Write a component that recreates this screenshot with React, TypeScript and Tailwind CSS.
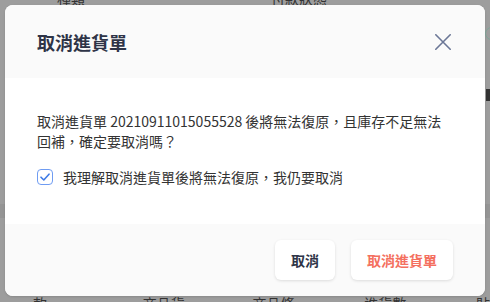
import React from "react";

const font = { fontFamily: '"Noto Sans CJK TC", "Noto Sans", sans-serif' };

function CloseIcon() {
  return (
    <svg width="16" height="16" viewBox="0 0 16 16" fill="none">
      <path d="M0.8 0.8L15.2 15.2M15.2 0.8L0.8 15.2" stroke="#6b7796" strokeWidth="1.6" strokeLinecap="round" />
    </svg>
  );
}

function CheckBox() {
  return (
    <span className="flex h-4 w-4 shrink-0 items-center justify-center rounded-[4px] border-[1.5px] border-[#6f9cf2] bg-white">
      <svg width="10" height="8" viewBox="0 0 10 8" fill="none">
        <path d="M1 4.2L3.8 7L9 1.2" stroke="#3f7be6" strokeWidth="1.6" strokeLinecap="round" strokeLinejoin="round" />
      </svg>
    </span>
  );
}

export default function App() {
  return (
    <div className="relative h-[302px] w-[490px] overflow-hidden bg-[#9d9d9d]" style={font}>
      {/* page behind the overlay */}
      <div className="flex h-full flex-col text-[14px] text-[#2f2f2f]">
        <div className="-mt-[12px] flex h-[16px] text-[#333]">
          <span className="ml-[57px]">種類</span>
          <span className="ml-[186px]">付款狀態</span>
        </div>
        <div className="flex-1" />
        <div className="h-[14px] bg-[#959595]" />
        <div className="h-[75px]" />
        <div className="flex h-[9px] leading-[20px] text-[#333]">
          <span className="ml-[33px]">款式</span>
          <span className="ml-[82px]">商品貨號</span>
          <span className="ml-[54px]">商品條碼</span>
          <span className="ml-[56px]">進貨數量</span>
          <span className="ml-[56px]">貼</span>
        </div>
      </div>
      <div className="absolute right-[-8px] top-[27px] h-[13px] w-[13px] rounded-full border border-[#7fa79a]" />
      <div className="absolute right-0 top-[89px] h-[12px] w-[4px] bg-[#333]" />

      {/* modal */}
      <div className="absolute inset-0 p-[5px] pb-[6px]">
        <div className="flex h-full w-[480px] flex-col overflow-hidden rounded-[8px] bg-white shadow-sm">
          <div className="flex h-[73px] items-center justify-between bg-[#fafafa] pl-[32px] pr-[34px]">
            <h2 className="text-[18px] font-bold leading-[24px] text-[#2e3447]">取消進貨單</h2>
            <CloseIcon />
          </div>
          <div className="flex flex-1 flex-col px-[32px] pt-[33px]">
            <p className="text-[14px] leading-[20px] text-[#333]">
              取消進貨單 20210911015055528 後將無法復原，且庫存不足無法回補，確定要取消嗎？
            </p>
            <label className="mt-[16px] flex items-center gap-[10px] text-[14px] leading-[20px] text-[#333]">
              <CheckBox />
              <span>我理解取消進貨單後將無法復原，我仍要取消</span>
            </label>
          </div>
          <div className="flex h-[72px] items-start justify-end gap-4 bg-[#fafafa] pr-[32px] pt-[16px]">
            <button className="h-[40px] rounded-[6px] bg-white px-4 text-[14px] font-bold text-[#2e3447] shadow-[0_1px_3px_rgba(0,0,0,0.12)]">
              取消
            </button>
            <button className="h-[40px] rounded-[6px] bg-white px-4 text-[14px] font-bold text-[#f4705f] shadow-[0_1px_3px_rgba(0,0,0,0.12)]">
              取消進貨單
            </button>
          </div>
        </div>
      </div>
    </div>
  );
}
